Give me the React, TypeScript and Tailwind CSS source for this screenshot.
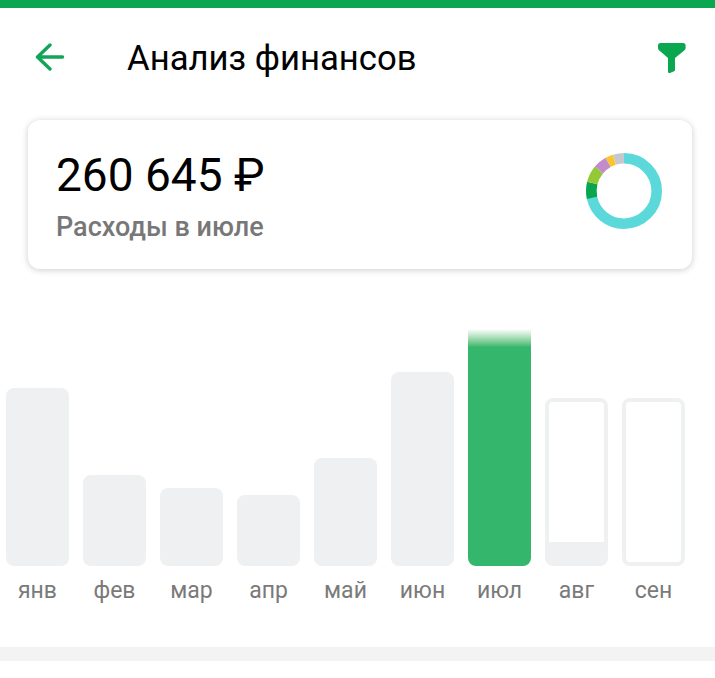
const months = [
  { label: "янв", height: 178, kind: "past" },
  { label: "фев", height: 91, kind: "past" },
  { label: "мар", height: 78, kind: "past" },
  { label: "апр", height: 71, kind: "past" },
  { label: "май", height: 108, kind: "past" },
  { label: "июн", height: 194, kind: "past" },
  { label: "июл", height: 237, kind: "current" },
  { label: "авг", height: 168, kind: "partial" },
  { label: "сен", height: 168, kind: "future" },
]

const RADIUS = 32.7
const CIRC = 2 * Math.PI * RADIUS

// clockwise from 12 o'clock, in degrees
const segments = [
  { color: "#5bd9da", from: 0, to: 258 },
  { color: "#0aa64f", from: 258, to: 284 },
  { color: "#93c935", from: 284, to: 310 },
  { color: "#c28ccb", from: 310, to: 331 },
  { color: "#fbc62d", from: 331, to: 343 },
  { color: "#c5c9cf", from: 343, to: 360 },
]

function Donut() {
  return (
    <svg width="80" height="80" viewBox="0 0 80 80" className="-mt-[7px] shrink-0">
      <g transform="rotate(-90 40 40)">
        {segments.map((s) => (
          <circle
            key={s.color}
            cx="40"
            cy="40"
            r={RADIUS}
            fill="none"
            stroke={s.color}
            strokeWidth="10.6"
            strokeDasharray={`${((s.to - s.from) / 360) * CIRC} ${CIRC}`}
            transform={`rotate(${s.from} 40 40)`}
          />
        ))}
      </g>
    </svg>
  )
}

function Bar({ height, kind }: { height: number; kind: string }) {
  if (kind === "current") {
    return (
      <div className="w-[63px] overflow-hidden rounded-b-lg bg-[#34b76c]" style={{ height }}>
        <div className="h-[18px] bg-gradient-to-b from-white to-[#34b76c]" />
      </div>
    )
  }
  if (kind === "partial") {
    return (
      <div
        className="flex w-[63px] flex-col justify-end overflow-hidden rounded-lg border-[4px] border-[#eef0f1]"
        style={{ height }}
      >
        <div className="h-[20px] bg-[#eef0f1]" />
      </div>
    )
  }
  if (kind === "future") {
    return <div className="w-[63px] rounded-lg border-[4px] border-[#eef0f1]" style={{ height }} />
  }
  return <div className="w-[63px] rounded-lg bg-[#eef0f1]" style={{ height }} />
}

export default function App() {
  return (
    <div className="h-[678px] w-[715px] overflow-hidden bg-white font-['Roboto',sans-serif]">
      <div className="h-2 bg-[#0aa650]" />

      <header className="flex h-[100px] items-center pl-[35px] pr-[28px]">
        <svg width="30" height="28" viewBox="0 0 30 28" fill="none" className="-mt-0.5 shrink-0">
          <path
            d="M27.5 14H3M15 2 2.5 14 15 26"
            stroke="#12a558"
            strokeWidth="3.4"
            strokeLinecap="round"
            strokeLinejoin="round"
          />
        </svg>
        <h1 className="ml-[62px] flex-1 text-[34.7px] leading-none text-black">Анализ финансов</h1>
        <svg width="30" height="32" viewBox="0 0 30 32" className="shrink-0">
          <path
            d="M3.5 1H26c1.6 0 2.6 1 2.6 2.5V6c0 .8-.3 1.3-.8 1.9L18 16v12c0 .6-.3 1-.9 1.2L13 31c-1 .3-2-.2-2-1.3V16L1.8 7.9C1.2 7.3 1 6.8 1 6V3.5C1 2 2 1 3.5 1Z"
            fill="#0aa650"
          />
        </svg>
      </header>

      <section className="ml-7 mr-[23px] mt-3 flex h-[149px] items-center justify-between rounded-xl bg-white pl-7 pr-[28px] shadow-[0_1px_7px_rgba(0,0,0,0.2)]">
        <div className="pt-[6px]">
          <div className="-mt-1 text-[46px] leading-[52px] text-black">260 645 ₽</div>
          <div className="mt-[10px] text-[27px] font-medium leading-[32px] text-[#777777]">Расходы в июле</div>
        </div>
        <Donut />
      </section>

      <section className="mt-[60px] flex items-end gap-[14px] pl-1.5">
        {months.map((m) => (
          <div key={m.label} className="flex w-[63px] flex-col items-center">
            <Bar height={m.height} kind={m.kind} />
            <div className="mt-3 text-[23px] leading-[26px] text-[#7a7a7a]">{m.label}</div>
          </div>
        ))}
      </section>

      <div className="mt-[43px] h-[14px] bg-[#f3f3f3]" />
    </div>
  )
}
